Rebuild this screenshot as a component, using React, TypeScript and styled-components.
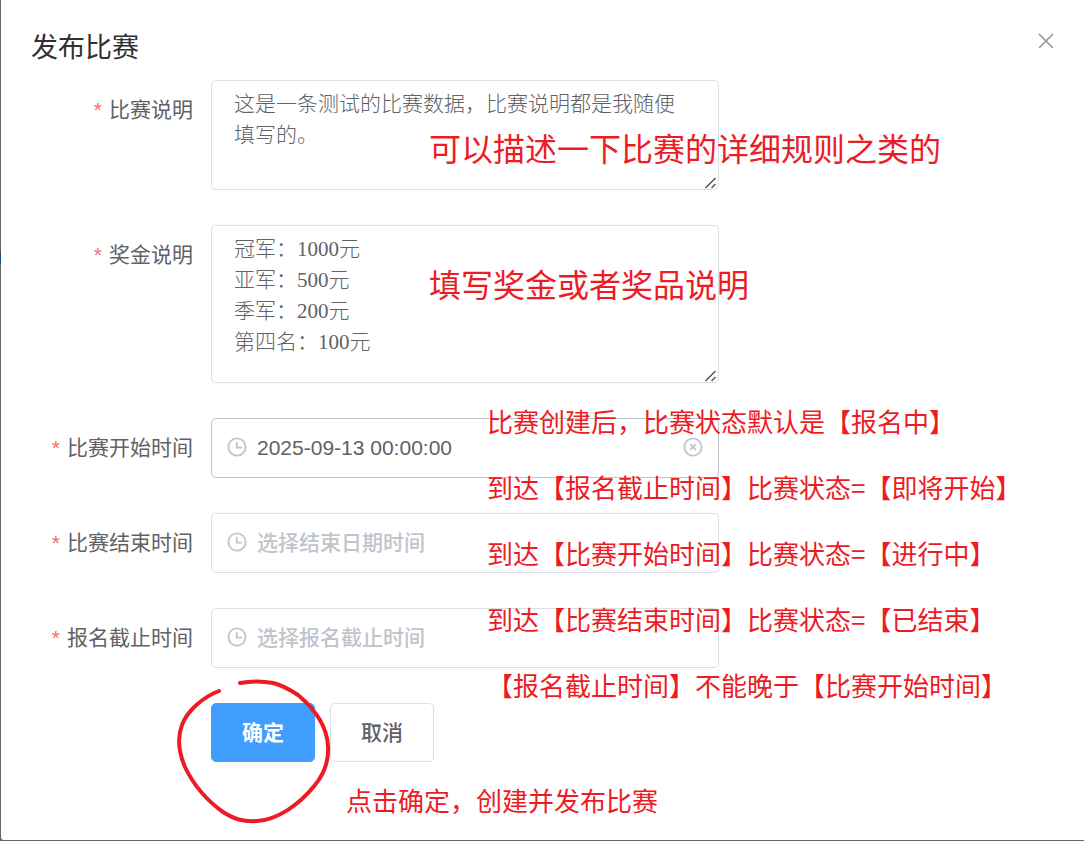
import React, { useState } from 'react';
import styled, { createGlobalStyle } from 'styled-components';

const Global = createGlobalStyle`
  * { box-sizing: border-box; }
  body {
    margin: 0;
    background: linear-gradient(#666 252px, #1f4a7d 253px, #1f4a7d 263px, #666 264px);
    font-family: "Liberation Sans", "Noto Sans CJK SC", sans-serif;
    color: #606266;
  }
`;

const Page = styled.main`
  display: flex;
  min-height: 100vh;
  padding: 0 0 1px 1px;
`;

const Dialog = styled.section`
  position: relative;
  flex: 1;
  min-width: 0;
  padding: 30px 30px 60px;
  background: #fff;
  border-radius: 0 0 0 3px;
`;

const Header = styled.header`
  display: flex;
  justify-content: space-between;
  align-items: flex-start;
  height: 50px;
`;

const Title = styled.h1`
  margin: 0;
  font-size: 27px;
  line-height: 36px;
  font-weight: 400;
  color: #303133;
`;

const CloseButton = styled.button`
  display: flex;
  padding: 3px 0;
  border: 0;
  background: none;
  color: #909399;
  cursor: pointer;
`;

const Form = styled.form`
  display: flex;
  flex-direction: column;
  gap: 35px;
`;

const Row = styled.div`
  display: grid;
  grid-template-columns: 180px minmax(0, 508px);
`;

const Label = styled.label`
  padding-right: 18px;
  text-align: right;
  font-size: 21px;
  line-height: 60px;
  white-space: nowrap;

  &::before {
    content: '*';
    margin-right: 7px;
    color: #f56c6c;
  }
`;

const TextAreaBox = styled.div`
  position: relative;
`;

const Grip = styled.svg`
  position: absolute;
  right: 2px;
  bottom: 1px;
  pointer-events: none;
`;

const StyledTextArea = styled.textarea<{ $height: number }>`
  display: block;
  width: 100%;
  height: ${(p) => p.$height}px;
  padding: 8px 24px 7px 22px;
  border: 1px solid #dcdfe6;
  border-radius: 5px;
  outline: none;
  resize: vertical;
  font-family: "Liberation Serif", "Noto Sans CJK SC", serif;
  font-size: 21px;
  font-weight: 300;
  line-height: 31px;
  color: #606266;

  &::-webkit-resizer {
    background: transparent;
  }
`;

const DateBox = styled.div<{ $hover?: boolean }>`
  display: flex;
  align-items: center;
  gap: 10px;
  height: 60px;
  padding: 0 15px 2px;
  border: 1px solid ${(p) => (p.$hover ? '#c0c4cc' : '#dcdfe6')};
  border-radius: 5px;
  color: #c0c4cc;
`;

const DateInput = styled.input`
  flex: 1;
  min-width: 0;
  padding: 1px 0 0;
  border: 0;
  outline: none;
  background: none;
  font-family: inherit;
  font-size: 21px;
  line-height: 30px;
  color: #606266;

  &::placeholder {
    color: #c0c4cc;
    font-weight: 500;
  }
`;

const ClearButton = styled.button`
  display: flex;
  padding: 0;
  border: 0;
  background: none;
  color: inherit;
  cursor: pointer;
`;

const Actions = styled.div`
  display: flex;
  gap: 15px;
  padding-left: 180px;
`;

const Button = styled.button<{ $primary?: boolean }>`
  width: 104px;
  height: 59px;
  padding: 0 0 3px;
  border: 1px solid ${(p) => (p.$primary ? '#409eff' : '#dcdfe6')};
  border-radius: 5px;
  background: ${(p) => (p.$primary ? '#409eff' : '#fff')};
  color: ${(p) => (p.$primary ? '#fff' : '#606266')};
  font-family: inherit;
  font-size: 21px;
  font-weight: ${(p) => (p.$primary ? 700 : 500)};
  cursor: pointer;
`;

const Note = styled.p<{ $x: number; $y: number; $size: number; $line: number }>`
  position: absolute;
  left: ${(p) => p.$x}px;
  top: ${(p) => p.$y}px;
  margin: 0;
  font-family: "Noto Sans CJK SC", sans-serif;
  font-size: ${(p) => p.$size}px;
  line-height: ${(p) => p.$line}px;
  color: #ed1c24;
  white-space: pre;
  pointer-events: none;
`;

const Circle = styled.svg`
  position: absolute;
  left: 169px;
  top: 670px;
  pointer-events: none;
`;

const ClockIcon = () => (
  <svg width="20" height="20" viewBox="0 0 20 20" fill="none" stroke="currentColor" strokeWidth="1.8" aria-hidden="true">
    <circle cx="10" cy="10" r="8.6" />
    <path d="M9.8 5v5.6H15" />
  </svg>
);

const ClearIcon = () => (
  <svg width="20" height="20" viewBox="0 0 20 20" fill="none" stroke="currentColor" strokeWidth="1.8" aria-hidden="true">
    <circle cx="10" cy="10" r="8.6" />
    <path d="M7.2 7.2l5.6 5.6M12.8 7.2l-5.6 5.6" />
  </svg>
);

const TextArea = (props: { id: string; $height: number; defaultValue: string }) => (
  <TextAreaBox>
    <StyledTextArea {...props} />
    <Grip width="12" height="12" viewBox="0 0 12 12" fill="none" stroke="#555" strokeWidth="1.5" aria-hidden="true">
      <path d="M0.5 11L10.500 1M6.500 11L10.500 7" />
    </Grip>
  </TextAreaBox>
);

const rules = [
  '比赛创建后，比赛状态默认是【报名中】',
  '到达【报名截止时间】比赛状态=【即将开始】',
  '到达【比赛开始时间】比赛状态=【进行中】',
  '到达【比赛结束时间】比赛状态=【已结束】',
  '【报名截止时间】不能晚于【比赛开始时间】',
].join('\n');

export default function App() {
  const [start, setStart] = useState('2025-09-13 00:00:00');

  return (
    <Page>
      <Global />
      <Dialog role="dialog" aria-labelledby="dialog-title">
        <Header>
          <Title id="dialog-title">发布比赛</Title>
          <CloseButton type="button" aria-label="关闭">
            <svg width="16" height="16" viewBox="0 0 16 16" fill="none" stroke="currentColor" strokeWidth="1.5">
              <path d="M1 1l14 14M15 1L1 15" />
            </svg>
          </CloseButton>
        </Header>

        <Form onSubmit={(e) => e.preventDefault()}>
          <Row>
            <Label htmlFor="desc">比赛说明</Label>
            <TextArea id="desc" $height={110} defaultValue="这是一条测试的比赛数据，比赛说明都是我随便填写的。" />
          </Row>
          <Row>
            <Label htmlFor="prize">奖金说明</Label>
            <TextArea
              id="prize"
              $height={158}
              defaultValue={'冠军：1000元\n亚军：500元\n季军：200元\n第四名：100元'}
            />
          </Row>
          <Row>
            <Label htmlFor="start">比赛开始时间</Label>
            <DateBox $hover>
              <ClockIcon />
              <DateInput id="start" value={start} onChange={(e) => setStart(e.target.value)} />
              <ClearButton type="button" aria-label="清空" onClick={() => setStart('')}>
                <ClearIcon />
              </ClearButton>
            </DateBox>
          </Row>
          <Row>
            <Label htmlFor="end">比赛结束时间</Label>
            <DateBox>
              <ClockIcon />
              <DateInput id="end" placeholder="选择结束日期时间" />
            </DateBox>
          </Row>
          <Row>
            <Label htmlFor="deadline">报名截止时间</Label>
            <DateBox>
              <ClockIcon />
              <DateInput id="deadline" placeholder="选择报名截止时间" />
            </DateBox>
          </Row>
          <Actions>
            <Button type="submit" $primary>确定</Button>
            <Button type="button">取消</Button>
          </Actions>
        </Form>

        <Note $x={428} $y={123} $size={32} $line={48}>可以描述一下比赛的详细规则之类的</Note>
        <Note $x={428} $y={259} $size={32} $line={48}>填写奖金或者奖品说明</Note>
        <Note $x={486} $y={388} $size={26} $line={66}>{rules}</Note>
        <Note $x={345} $y={780} $size={26} $line={40}>点击确定，创建并发布比赛</Note>
        <Circle width="170" height="160" viewBox="170 670 170 160" fill="none" stroke="#ed1c24" strokeWidth="4" strokeLinecap="round" aria-hidden="true">
          <path d="M219 691C203 697 187 711 182 725C177 738 179 753 185 767C195 788 209 802 223 812C234 819 243 822 257 821C277 820 299 805 315 785C324 774 329 761 328 746C327 728 316 710 298 695C289 689 281 685 273 683C263 681 251 681 240 683" />
        </Circle>
      </Dialog>
    </Page>
  );
}
